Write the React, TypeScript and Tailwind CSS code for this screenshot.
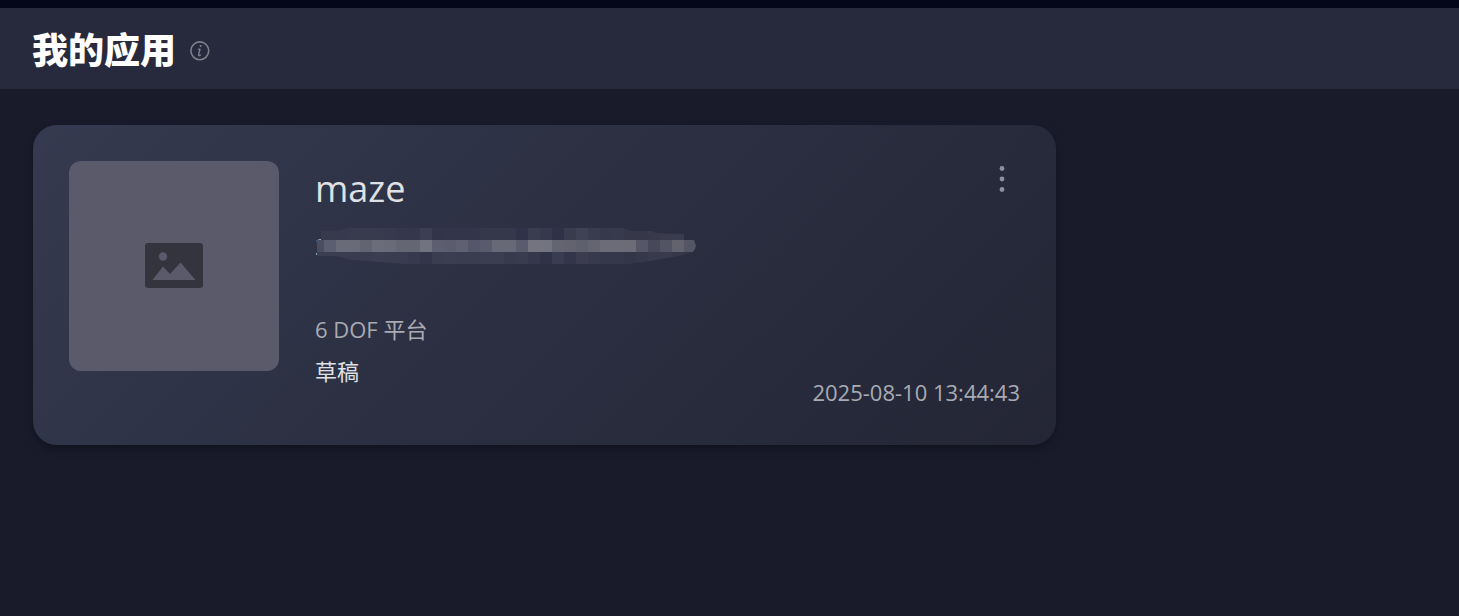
const FONT = 'font-["Open_Sans","Noto_Sans_CJK_SC",sans-serif]'

const CELL = 12

// One colour per 12px cell, left to right, for each band of the mosaic
const MOSAIC = [
    [
        "#373a4d", "#373a4d", "#373a4e", "#383b4e", "#383b4e", "#383b4e", "#373a4e", "#35384c",
        "#35384c", "#3c3f52", "#32354a", "#33364b", "#33364b", "#33364b", "#35384b", "#35384b", "#35384b",
        "#2f3248", "#3a3c4f", "#36384c", "#2f3247", "#3a3c4e", "#404254", "#393b4e", "#36394b",
        "#37394c", "#36384a", "#36384a", "#383a4c", "#3a3b4d", "#3a3b4c", "#3a3b4c",
    ],
    [
        "#4a4c5f", "#5c5d6e", "#6a6b79", "#6a6b79", "#636472", "#6c6d7a", "#6a6b78", "#656674",
        "#656674", "#727380", "#5d5e6f", "#5b5c6d", "#5f6070", "#55566a", "#595a6b", "#686976", "#686976",
        "#5a5b6c", "#737480", "#737480", "#646573", "#62636f", "#5f606d", "#646571", "#6b6c77",
        "#6b6c77", "#6b6c77", "#565766", "#474859", "#525363", "#62636f", "#555665",
    ],
    [
        "#3b3e51", "#3b3e51", "#3a3d50", "#393c4f", "#393c4f", "#3b3e50", "#3a3d50", "#3a3d50",
        "#373a4e", "#33364a", "#3a3d50", "#3b3d50", "#3a3d50", "#3a3d50", "#3b3d50", "#3b3d50", "#373a4d",
        "#393b4e", "#35384b", "#303348", "#3a3c4f", "#33364a", "#3b3d4f", "#38394c", "#35374a",
        "#35374a", "#333549", "#36384a", "#393b4c", "#393b4c", "#36384a", "#333547",
    ],
]

function InfoIcon() {
    return (
        <svg viewBox="0 0 20 20" className="size-5" fill="none" stroke="currentColor" aria-hidden="true">
            <circle cx="9.8" cy="9.8" r="8.9" strokeWidth="1.6" />
            <circle cx="10.6" cy="5" r="1.1" fill="currentColor" stroke="none" />
            <path d="M8.7 8.3h1.3L8.6 13.400c-.3 1.300.5 1.700 1.700.5" strokeWidth="1.4" strokeLinecap="round" strokeLinejoin="round" />
        </svg>
    )
}

function ImageIcon() {
    return (
        <svg viewBox="0 0 58 46" className="h-[46px] w-[58px]" aria-hidden="true">
            <rect x="0" y="0" width="58" height="45" rx="3" fill="#34343f" />
            <circle cx="18" cy="13.5" r="4.2" fill="#5a5a6b" />
            <path d="M7.5 37 18 23.5l7 7.5L35.5 19.5 50.5 37z" fill="#5a5a6b" />
        </svg>
    )
}

function MoreIcon() {
    return (
        <svg viewBox="0 0 36 36" className="size-9" fill="currentColor" aria-hidden="true">
            <circle cx="18" cy="7.5" r="2.4" />
            <circle cx="18" cy="18" r="2.4" />
            <circle cx="18" cy="28.5" r="2.4" />
        </svg>
    )
}

function Mosaic() {
    return (
        <svg
            viewBox="0 0 384 36"
            className="absolute top-0 left-0 h-9 w-[384px]"
            shapeRendering="crispEdges"
            aria-hidden="true"
        >
            <clipPath id="smudge">
                <path d="M2 12h4V3h17l9-3h275l10 3h20l4 2 28 1v6h10l1 3 1 3-1 3-2 3-9 3-40 7-16 2H90l-26-2-28-2-10-3-10-1H2z" />
            </clipPath>
            <g clipPath="url(#smudge)">
                {MOSAIC.map((band, row) =>
                    band.map((color, i) => (
                        <rect
                            key={`${row}-${i}`}
                            x={i * CELL - 3}
                            y={row * CELL}
                            width={CELL}
                            height={CELL}
                            fill={color}
                        />
                    ))
                )}
            </g>
        </svg>
    )
}

function AppCard() {
    return (
        <article className="flex min-h-80 w-full max-w-[1023px] gap-9 rounded-3xl bg-linear-[135deg] from-[#363a50] via-[#2b2f41] to-[#242635] p-9 shadow-[0_4px_8px_rgba(0,0,0,0.3)]">
            <div className="flex size-[210px] shrink-0 items-center justify-center rounded-xl bg-[#5a5a6b]">
                <ImageIcon />
            </div>
            <div className="min-w-0 flex-1 text-[22px] leading-9">
                <h2 className="text-4xl leading-14 text-[#dfe1e5]">maze</h2>
                <p className="relative mt-[11px] h-9 text-[#a9abb3]">
                    2
                    <Mosaic />
                </p>
                <p className="mt-[47px] text-[#a9abb3]">6 DOF 平台</p>
                <p className="mt-1.5 text-[#dfe1e5]">草稿</p>
            </div>
            <div className="flex shrink-0 flex-col items-end justify-between">
                <button type="button" aria-label="更多" className="text-[#8e909b]">
                    <MoreIcon />
                </button>
                <time dateTime="2025-08-10T13:44:43" className="text-[22px] leading-[34px] text-[#a9abb3]">
                    2025-08-10 13:44:43
                </time>
            </div>
        </article>
    )
}

export default function App() {
    return (
        <div className={`min-h-screen bg-[#191b2b] ${FONT}`}>
            <header className="flex items-center gap-3.5 border-t-8 border-[#030719] bg-[#27293c] px-8 pt-[18px] pb-3.5">
                <h1 className="text-4xl leading-[49px] font-black text-white">我的应用</h1>
                <button type="button" aria-label="说明" className="text-[#7f818c]">
                    <InfoIcon />
                </button>
            </header>
            <main className="px-[33px] py-9">
                <AppCard />
            </main>
        </div>
    )
}
